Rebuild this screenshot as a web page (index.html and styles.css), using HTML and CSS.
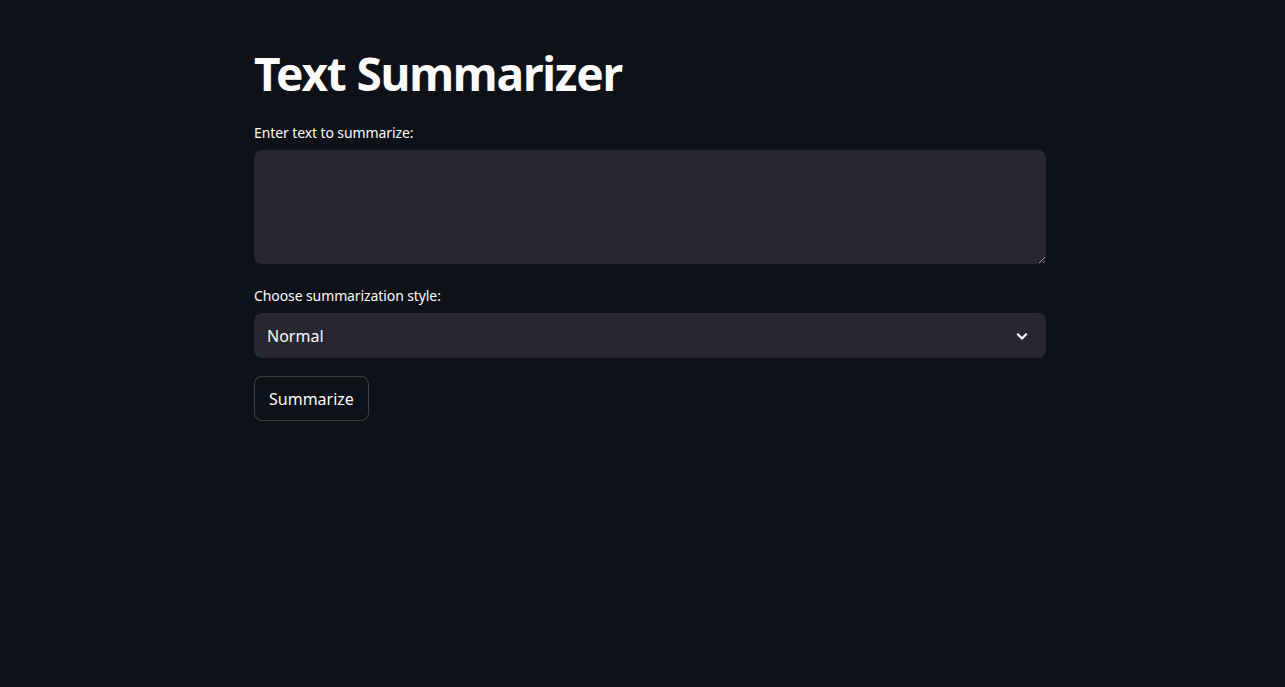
FILE: index.html
```html
<!DOCTYPE html>
<html lang="en">
<head>
    <meta charset="UTF-8">
    <meta name="viewport" content="width=device-width, initial-scale=1">
    <title>Text Summarizer</title>
    <link rel="stylesheet" href="styles.css">
</head>
<body>

<div class="main">
    <h1>Text Summarizer</h1>

    <div class="field field-text">
        <label for="inputText">Enter text to summarize:</label>
        <textarea id="inputText"></textarea>
    </div>

    <div class="field">
        <label>Choose summarization style:</label>
        <div class="select">
            <span>Normal</span>
            <svg width="20" height="20" viewBox="0 0 24 24" fill="none" stroke="#fafafa" stroke-width="2.6" stroke-linecap="round" stroke-linejoin="round">
                <path d="M7 10l5 5 5-5"/>
            </svg>
        </div>
    </div>

    <button class="btn">Summarize</button>
</div>

</body>
</html>
```

FILE: styles.css
```css
body {
    margin: 0;
    padding-left: 15px;
    background-color: #0e1117;
    color: #fafafa;
    font-family: "Noto Sans", "Liberation Sans", sans-serif;
}

.main {
    width: 792px;
    margin: 0 auto;
    padding-top: 42px;
}

h1 {
    margin: 0 0 19px;
    font-size: 46px;
    font-weight: 700;
    line-height: 62px;
    letter-spacing: -1.2px;
}

.field {
    margin-bottom: 18px;
}

.field-text {
    margin-bottom: 22px;
}

.field label {
    display: block;
    font-size: 14px;
    line-height: 20px;
    margin-bottom: 7px;
    letter-spacing: -0.1px;
}

textarea {
    display: block;
    box-sizing: border-box;
    width: 100%;
    height: 114px;
    background-color: #262730;
    border: none;
    border-radius: 8px;
    color: #fafafa;
    padding: 12px 16px;
    outline: none;
    font-family: inherit;
}

.select {
    display: flex;
    align-items: center;
    justify-content: space-between;
    height: 45px;
    padding: 0 14px 0 13px;
    background-color: #262730;
    border-radius: 8px;
    font-size: 16px;
}

.btn {
    height: 45px;
    padding: 0 14px;
    background-color: #0e1117;
    border: 1px solid rgba(250, 250, 250, 0.2);
    border-radius: 8px;
    color: #fafafa;
    font-size: 16px;
    font-family: inherit;
}
```
